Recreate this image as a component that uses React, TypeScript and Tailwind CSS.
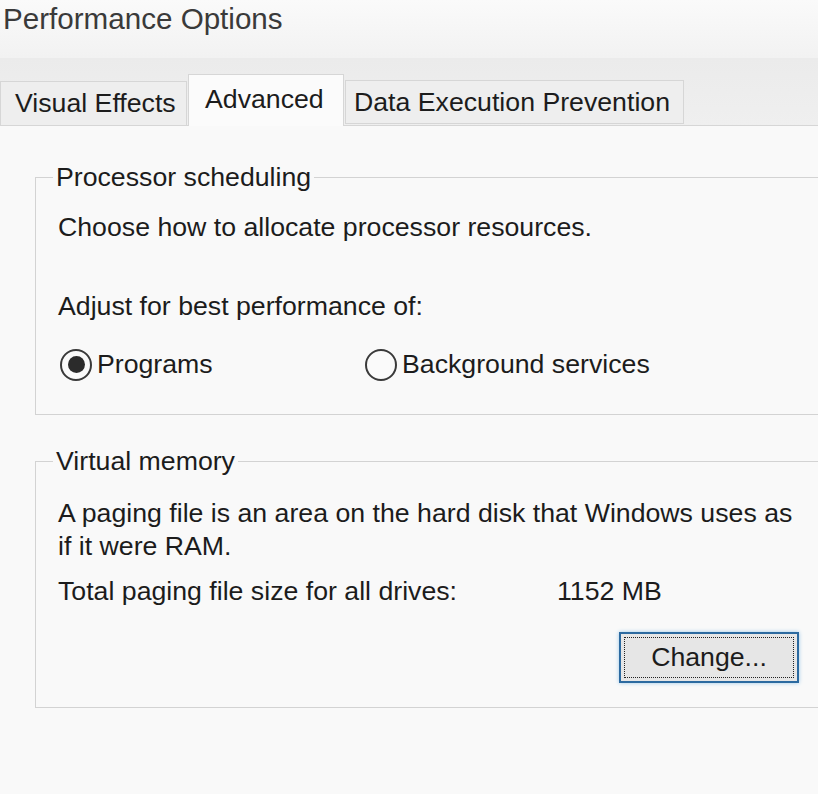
import React from 'react'

const font = { fontFamily: '"Liberation Sans", Arial, sans-serif' }

function Radio({ checked, label }: { checked?: boolean; label: string }) {
  return (
    <div className="flex items-center gap-[5px]">
      <span className="flex h-[32px] w-[32px] items-center justify-center rounded-full border-2 border-[#3a3a3a] bg-[#fafafa]">
        {checked && <span className="h-[17px] w-[17px] rounded-full bg-[#2b2b2b]" />}
      </span>
      <span>{label}</span>
    </div>
  )
}

export default function App() {
  return (
    <div
      className="w-[818px] h-[794px] overflow-hidden bg-[#f9f9f9] text-[26.7px] leading-[33px] text-[#1c1c1c] flex flex-col"
      style={font}
    >
      {/* Title */}
      <div className="h-[58px] shrink-0 bg-gradient-to-b from-[#fafafa] to-[#f2f2f2] pl-[3px] pt-[1px] text-[29.6px] leading-[36px] text-[#3a3a3a]">
        Performance Options
      </div>

      {/* Tabs */}
      <div className="h-[68px] shrink-0 flex items-end bg-gradient-to-b from-[#ebebeb] to-[#efefef] border-b border-[#d6d6d6]">
        <div className="h-[45px] w-[187px] -mb-px flex items-center pl-[14px] border border-[#d6d6d6] bg-[#eeeeee]">
          Visual Effects
        </div>
        <div className="relative z-10 -mb-px ml-[1px] h-[52px] w-[156px] flex items-start pt-[8px] pl-[16px] border border-b-0 border-[#d6d6d6] bg-[#fbfbfb]">
          Advanced
        </div>
        <div className="h-[44px] w-[339px] ml-[1px] mb-[1px] flex items-center pl-[8px] border border-[#d6d6d6] bg-[#eeeeee]">
          Data Execution Prevention
        </div>
      </div>

      {/* Panel */}
      <div className="flex-1 pt-[35px]">
        <fieldset className="ml-[35px] w-[820px] border border-[#d3d3d3] pb-[33px]">
          <legend className="ml-[17px] px-[3px]">Processor scheduling</legend>
          <div className="pl-[22px] mt-[17px]">Choose how to allocate processor resources.</div>
          <div className="pl-[22px] mt-[46px]">Adjust for best performance of:</div>
          <div className="pl-[24px] mt-[25px] flex">
            <div className="w-[305px]">
              <Radio checked label="Programs" />
            </div>
            <Radio label="Background services" />
          </div>
        </fieldset>

        <fieldset className="ml-[35px] mt-[30px] w-[820px] border border-[#d3d3d3] pb-[24px]">
          <legend className="ml-[17px] px-[3px]">Virtual memory</legend>
          <div className="pl-[22px] mt-[19px] w-[800px]">
            A paging file is an area on the hard disk that Windows uses as
            <br />
            if it were RAM.
          </div>
          <div className="pl-[22px] mt-[12px] flex">
            <span className="w-[499px]">Total paging file size for all drives:</span>
            <span>1152 MB</span>
          </div>
          <div className="pl-[583px] mt-[24px]">
            <button className="h-[51px] w-[180px] border-2 border-[#2c6aa0] bg-[#e6e6e6] p-[3px] shadow-[0_0_4px_#9cc8ea]">
              <span className="flex h-full w-full items-center justify-center border border-dotted border-[#222]">
                Change...
              </span>
            </button>
          </div>
        </fieldset>
      </div>
    </div>
  )
}
